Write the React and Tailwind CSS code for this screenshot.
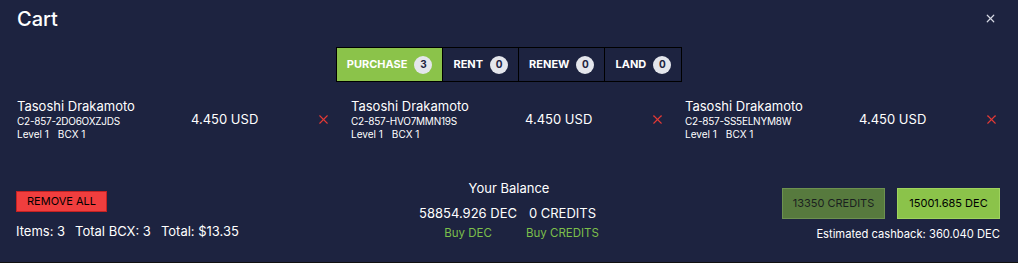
import { X } from 'lucide-react';

const tabs = [
  { label: 'PURCHASE', count: 3, active: true },
  { label: 'RENT', count: 0 },
  { label: 'RENEW', count: 0 },
  { label: 'LAND', count: 0 },
];

const items = [
  { name: 'Tasoshi Drakamoto', uid: 'C2-857-2DO6OXZJDS' },
  { name: 'Tasoshi Drakamoto', uid: 'C2-857-HVO7MMN19S' },
  { name: 'Tasoshi Drakamoto', uid: 'C2-857-SS5ELNYM8W' },
];

const Cart = () => {
  return (
    <div className="w-[1018px] h-[263px] bg-[#1d2340] text-white font-['Inter',sans-serif] border-b border-[#111] overflow-hidden">
      <div className="flex items-center justify-between pl-[17px] pr-[21px] h-[37px]">
        <h2 className="text-[20px] font-medium leading-none">Cart</h2>
        <button className="text-[#d6d8e4]">
          <X size={13} strokeWidth={2.2} />
        </button>
      </div>

      <div className="flex justify-center mt-[10px]">
        <div className="flex border border-black">
          {tabs.map((tab) => (
            <div
              key={tab.label}
              className={`flex items-center gap-[7px] h-[33px] px-[10px] border-r border-black last:border-r-0 text-[11px] font-bold ${
                tab.active ? 'bg-[#8bc34a]' : 'bg-[#1d2340]'
              }`}
            >
              <span>{tab.label}</span>
              <span className="w-[18px] h-[18px] rounded-full bg-[#e4e6ec] text-[#1d2340] text-[10px] flex items-center justify-center">
                {tab.count}
              </span>
            </div>
          ))}
        </div>
      </div>

      <div className="grid grid-cols-[334px_334px_334px] pl-[17px] mt-[16px]">
        {items.map((item) => (
          <div key={item.uid} className="flex items-center">
            <div className="w-[174px]">
              <div className="text-[13px] leading-[16px]">{item.name}</div>
              <div className="text-[10px] leading-[13px] mt-[1px] tracking-[-0.25px]">{item.uid}</div>
              <div className="text-[10px] leading-[13px] flex gap-[9px]">
                <span>Level 1</span>
                <span>BCX 1</span>
              </div>
            </div>
            <div className="text-[13px] w-[125px]">4.450 USD</div>
            <X size={15} strokeWidth={1.7} className="shrink-0 text-[#e53935]" />
          </div>
        ))}
      </div>

      <div className="flex justify-between items-start px-[16px] mt-[41px]">
        <div className="w-[320px] pt-[5px]">
          <button className="bg-[#f03e3e] border border-[#c52222] text-black text-[11px] px-[10px] h-[21px] leading-none">
            REMOVE ALL
          </button>
          <div className="text-[13px] mt-[10px] flex gap-[10px]">
            <span>Items: 3</span>
            <span>Total BCX: 3</span>
            <span>Total: $13.35</span>
          </div>
        </div>

        <div className="flex flex-col items-center text-[13px]">
          <div className="leading-[16px] mt-[-2px]">Your Balance</div>
          <div className="flex gap-[9px] mt-[9px]">
            <div className="flex flex-col items-center">
              <span className="leading-[16px]">58854.926 DEC</span>
              <span className="mt-[5px] text-[11.5px] text-[#7cbf4b] leading-[14px]">Buy DEC</span>
            </div>
            <div className="flex flex-col items-center">
              <span className="leading-[16px]">0 CREDITS</span>
              <span className="mt-[5px] text-[11.5px] text-[#7cbf4b] leading-[14px]">Buy CREDITS</span>
            </div>
          </div>
        </div>

        <div className="w-[320px] flex flex-col items-end pr-[2px] pt-[6px]">
          <div className="flex gap-[12px]">
            <button className="bg-[#577a3e] border border-[#6d9150] text-[#1a1f20] text-[11px] h-[31px] w-[103px]">
              13350 CREDITS
            </button>
            <button className="bg-[#8bc34a] border border-[#9fd35e] text-black text-[11px] h-[31px] w-[103px]">
              15001.685 DEC
            </button>
          </div>
          <div className="text-[11.2px] mt-[7px]">Estimated cashback: 360.040 DEC</div>
        </div>
      </div>
    </div>
  );
};

export default Cart;
